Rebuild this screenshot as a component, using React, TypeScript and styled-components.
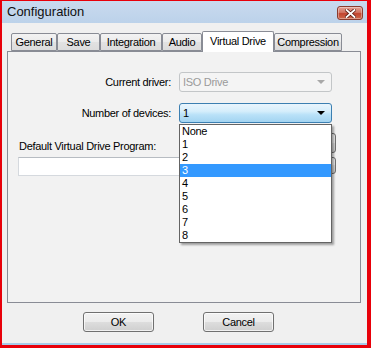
import React from "react";
import styled, { createGlobalStyle } from "styled-components";

const Global = createGlobalStyle`
  html, body { margin: 0; padding: 0; background: #ffffff; }
  body { font-family: "Liberation Sans", Arial, sans-serif; font-size: 11px; }
  * { box-sizing: border-box; }
`;

const Frame = styled.div`
  width: 371px;
  height: 348px;
  background: #e8000a;
  padding: 1px 4px 3px 2px;
  display: flex;
`;

const Win = styled.div`
  flex: 1;
  display: flex;
  flex-direction: column;
  background: #f0f0f0;
`;

const TitleBar = styled.div`
  height: 22px;
  display: flex;
  align-items: flex-start;
  justify-content: space-between;
  background: linear-gradient(#c9daee, #bcd2ea);
  padding: 0 4px 0 5px;
`;

const TitleText = styled.div`
  font-size: 13px;
  line-height: 22px;
  color: #101010;
`;

const CloseBtn = styled.div`
  margin-top: 5px;
  width: 26px;
  height: 14px;
  border: 1px solid #8b3b2e;
  border-radius: 3px;
  background: linear-gradient(#e3a195 0%, #d27563 45%, #c2442f 55%, #cf6a4c 100%);
  display: flex;
  align-items: center;
  justify-content: center;
  box-shadow: inset 0 0 0 1px rgba(255,255,255,0.35);
`;

const Body = styled.div`
  flex: 1;
  display: flex;
  flex-direction: column;
  padding: 8px 6px 11px 5px;
  border-bottom: 2px solid #a8cbe9;
  color: #000;
  letter-spacing: -0.3px;
`;

const TabStrip = styled.div`
  height: 20px;
  display: flex;
  align-items: flex-end;
  padding-left: 4px;
  position: relative;
  z-index: 1;
`;

const Tab = styled.div<{ $w: number; $active?: boolean }>`
  width: ${(p) => p.$w}px;
  height: ${(p) => (p.$active ? 21 : 18)}px;
  margin-bottom: ${(p) => (p.$active ? -1 : 0)}px;
  border: 1px solid #898c95;
  border-bottom: ${(p) => (p.$active ? "none" : "1px solid #898c95")};
  border-radius: 2px 2px 0 0;
  background: ${(p) =>
    p.$active ? "#ffffff" : "linear-gradient(#f3f3f3, #ebebeb 50%, #e2e2e2 50%, #dcdcdc)"};
  display: flex;
  align-items: center;
  justify-content: center;
  padding-bottom: ${(p) => (p.$active ? 3 : 0)}px;
  font-size: 11px;
  white-space: nowrap;
`;

const Panel = styled.div`
  height: 252px;
  border: 1px solid #898c95;
  background: #f2f2f2;
  display: flex;
  flex-direction: column;
  padding: 20px 0 0 10px;
`;

const FieldRow = styled.div<{ $mt: number }>`
  display: flex;
  align-items: center;
  margin-top: ${(p) => p.$mt}px;
`;

const FieldLabel = styled.div`
  width: 161px;
  margin-left: -8px;
  text-align: right;
  margin-right: 8px;
  white-space: nowrap;
`;

const ComboWrap = styled.div`
  position: relative;
  width: 153px;
  z-index: 2;
`;

const Combo = styled.div<{ $disabled?: boolean }>`
  height: 20px;
  border: 1px solid ${(p) => (p.$disabled ? "#c3c6c8" : "#3c7fb1")};
  border-radius: 3px;
  background: ${(p) =>
    p.$disabled
      ? "#f4f4f4"
      : "linear-gradient(#e9f5fd 0%, #d6eefb 40%, #b9e1f8 60%, #a3d4f1 100%)"};
  color: ${(p) => (p.$disabled ? "#9a9a9a" : "#000")};
  display: flex;
  align-items: center;
  justify-content: space-between;
  padding: 0 6px 0 3px;
`;

const Arrow = styled.span<{ $disabled?: boolean }>`
  width: 0;
  height: 0;
  border-left: 4px solid transparent;
  border-right: 4px solid transparent;
  border-top: 4px solid ${(p) => (p.$disabled ? "#a8a8a8" : "#000")};
`;

const List = styled.div`
  position: absolute;
  top: 100%;
  left: 0;
  width: 100%;
  margin-top: 1px;
  background: #ffffff;
  border: 1px solid #646464;
  box-shadow: 2px 2px 2px rgba(0, 0, 0, 0.35);
  display: flex;
  flex-direction: column;
`;

const Item = styled.div<{ $sel?: boolean }>`
  height: 13px;
  line-height: 13px;
  padding-left: 2px;
  font-size: 11px;
  background: ${(p) => (p.$sel ? "#3399ff" : "transparent")};
  color: ${(p) => (p.$sel ? "#ffffff" : "#000")};
`;

const ProgRow = styled.div`
  display: flex;
  align-items: flex-end;
  justify-content: space-between;
  margin-top: 10px;
  height: 20px;
  padding-right: 24px;
`;

const ProgLabel = styled.div`
  line-height: 13px;
  margin-left: 1px;
`;

const SideButton = styled.div<{ $w: number; $h: number }>`
  width: ${(p) => p.$w}px;
  height: ${(p) => p.$h}px;
  border: 1px solid #707070;
  border-radius: 3px;
  background: linear-gradient(#f2f2f2, #ebebeb 50%, #dddddd 50%, #cfcfcf);
`;

const InputRow = styled.div`
  display: flex;
  align-items: flex-start;
  margin-top: 4px;
  padding-right: 24px;
  gap: 4px;
`;

const TextInput = styled.div`
  flex: 1;
  height: 19px;
  background: #ffffff;
  border: 1px solid #d5d9de;
  border-top-color: #b7bcc2;
`;

const ButtonRow = styled.div`
  display: flex;
  margin-top: 9px;
  padding-left: 76px;
  gap: 49px;
`;

const PushButton = styled.div`
  width: 71px;
  height: 20px;
  border: 1px solid #707070;
  border-radius: 3px;
  background: linear-gradient(#f2f2f2, #ebebeb 50%, #dddddd 50%, #cfcfcf);
  box-shadow: inset 0 0 0 1px rgba(255, 255, 255, 0.7);
  display: flex;
  align-items: center;
  justify-content: center;
  font-size: 11px;
`;

const tabs: { label: string; w: number; active?: boolean }[] = [
  { label: "General", w: 46 },
  { label: "Save", w: 43 },
  { label: "Integration", w: 62 },
  { label: "Audio", w: 40 },
  { label: "Virtual Drive", w: 72, active: true },
  { label: "Compression", w: 68 },
];

const items = ["None", "1", "2", "3", "4", "5", "6", "7", "8"];

export default function App() {
  return (
    <>
      <Global />
      <Frame>
        <Win>
          <TitleBar>
            <TitleText>Configuration</TitleText>
            <CloseBtn>
              <svg width="11" height="9" viewBox="0 0 11 9">
                <path
                  d="M1.5 1 L9.5 8 M9.5 1 L1.5 8"
                  stroke="#5a1a12"
                  strokeWidth="3.4"
                  strokeLinecap="square"
                />
                <path
                  d="M1.5 1 L9.5 8 M9.5 1 L1.5 8"
                  stroke="#ffffff"
                  strokeWidth="1.8"
                  strokeLinecap="square"
                />
              </svg>
            </CloseBtn>
          </TitleBar>
          <Body>
            <TabStrip>
              {tabs.map((t) => (
                <Tab key={t.label} $w={t.w} $active={t.active}>
                  {t.label}
                </Tab>
              ))}
            </TabStrip>
            <Panel>
              <FieldRow $mt={0}>
                <FieldLabel>Current driver:</FieldLabel>
                <ComboWrap>
                  <Combo $disabled>
                    <span>ISO Drive</span>
                    <Arrow $disabled />
                  </Combo>
                </ComboWrap>
              </FieldRow>
              <FieldRow $mt={11}>
                <FieldLabel>Number of devices:</FieldLabel>
                <ComboWrap>
                  <Combo>
                    <span>1</span>
                    <Arrow />
                  </Combo>
                  <List>
                    {items.map((it) => (
                      <Item key={it} $sel={it === "3"}>
                        {it}
                      </Item>
                    ))}
                  </List>
                </ComboWrap>
              </FieldRow>
              <ProgRow>
                <ProgLabel>Default Virtual Drive Program:</ProgLabel>
                <SideButton $w={80} $h={20} />
              </ProgRow>
              <InputRow>
                <TextInput />
                <SideButton $w={24} $h={17} />
              </InputRow>
            </Panel>
            <ButtonRow>
              <PushButton>OK</PushButton>
              <PushButton>Cancel</PushButton>
            </ButtonRow>
          </Body>
        </Win>
      </Frame>
    </>
  );
}
